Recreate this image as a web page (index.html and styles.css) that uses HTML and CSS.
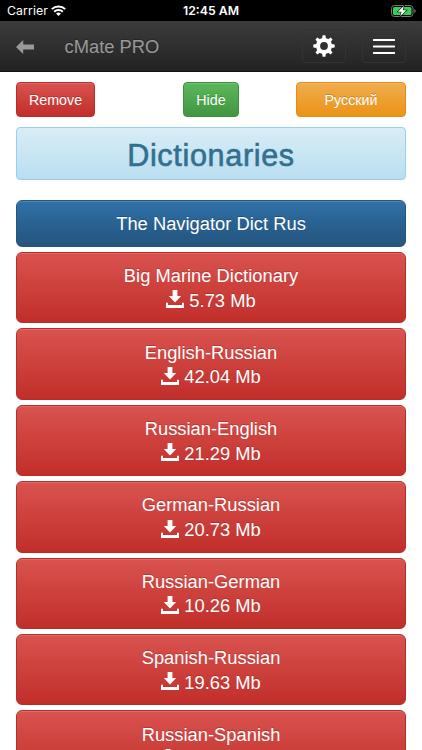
FILE: index.html
```html
<!DOCTYPE html>
<html lang="en">
<head>
<meta charset="utf-8">
<title>cMate PRO</title>
<link rel="stylesheet" href="styles.css">
</head>
<body>
<svg width="0" height="0" class="defs">
  <symbol id="download" viewBox="0 0 18 19">
    <path d="M6.6 0h4.8v6h3.8L9 12.4 2.8 6h3.8zM0 12.7h2v2.3h14v-2.3h2V18H0z"/>
  </symbol>
</svg>
<div class="status">
  <span class="carrier">Carrier</span>
  <svg class="wifi" viewBox="0 0 15 11"><g fill="none" stroke="#fff" stroke-width="2"><path d="M.8 4.1a9.6 9.6 0 0 1 13.4 0M3.2 6.7a6.2 6.2 0 0 1 8.6 0"/></g><path fill="#fff" d="M5 8.6a3.6 3.6 0 0 1 5 0L7.5 11z"/></svg>
  <span class="clock">12:45 AM</span>
  <svg class="battery" viewBox="0 0 25 12"><rect x=".5" y=".5" width="21.5" height="11" rx="3" fill="none" stroke="#777"/><rect x="2" y="2" width="18.5" height="8" rx="1.6" fill="#35d058"/><path d="M23.3 4v4q1.4-.6 1.4-2t-1.4-2z" fill="#777"/><path d="M12.9.8 6.8 6.8h3.7L9.3 11.3l6.1-6h-3.7z" fill="#fff" stroke="#000" stroke-width="1.1" paint-order="stroke"/></svg>
</div>
<header class="navbar">
  <svg class="back" viewBox="0 0 18 14"><path fill="#999" d="M0 7 7.2 0v4.4H18v5.2H7.2V14z"/></svg>
  <span class="brand">cMate PRO</span>
  <div class="nav-btn gear">
    <svg viewBox="-11 -11 22 22" width="22" height="22"><g fill="#fff"><path id="t" d="M-2-7-1.4-10.7h2.8L2-7V7l-.6 3.7h-2.8L-2 7z"/><use href="#t" transform="rotate(45)"/><use href="#t" transform="rotate(90)"/><use href="#t" transform="rotate(135)"/><circle r="8"/></g><circle r="3.9" fill="#303030"/></svg>
  </div>
  <div class="nav-btn menu"><svg viewBox="0 0 22 15" width="22" height="15"><path d="M.8 1h20.6M.8 7.5h20.6M.8 14h20.6" stroke="#fff" stroke-width="2" stroke-linecap="round"/></svg></div>
</header>
<main>
  <div class="actions">
    <div class="btn red remove">Remove</div>
    <div class="btn green">Hide</div>
    <div class="btn orange">Русский</div>
  </div>
  <h1>Dictionaries</h1>
  <div class="list">
    <div class="item blue">The Navigator Dict Rus</div>
    <div class="item red"><span>Big Marine Dictionary</span><span><svg><use href="#download"/></svg>5.73 Mb</span></div>
    <div class="item red"><span>English-Russian</span><span><svg><use href="#download"/></svg>42.04 Mb</span></div>
    <div class="item red"><span>Russian-English</span><span><svg><use href="#download"/></svg>21.29 Mb</span></div>
    <div class="item red"><span>German-Russian</span><span><svg><use href="#download"/></svg>20.73 Mb</span></div>
    <div class="item red"><span>Russian-German</span><span><svg><use href="#download"/></svg>10.26 Mb</span></div>
    <div class="item red"><span>Spanish-Russian</span><span><svg><use href="#download"/></svg>19.63 Mb</span></div>
    <div class="item red last"><span>Russian-Spanish</span><span><svg><use href="#download"/></svg></span></div>
  </div>
</main>
</body>
</html>
```
FILE: styles.css
```css
* { box-sizing: border-box; }
html, body { height: 750px; overflow: hidden; }
body { margin: 0; background: #fff; font-family: "Liberation Sans", Arial, sans-serif; color: #fff; }
.defs { display: block; }
.status { height: 21px; background: #000; display: grid; grid-template-columns: 44px 1fr auto 1fr 24px; align-items: center; padding: 0 6px 0 7px; font-family: Inter, sans-serif; font-size: 12.3px; }
.carrier { letter-spacing: .1px; }
.wifi { width: 15px; height: 11px; }
.clock { font-weight: 600; margin-right: 21px; }
.battery { width: 25px; height: 12px; grid-column: 5; margin-left: -1px; }
.navbar { height: 51px; background: linear-gradient(#3c3c3c, #222); border-bottom: 1px solid #111; display: flex; align-items: center; padding: 0 16px; }
.back { width: 18px; height: 14px; margin-top: 2px; }
.brand { margin: 2px 0 0 30.5px; font-size: 18.35px; color: #999; text-shadow: 0 -1px 0 rgba(0,0,0,.25); }
.nav-btn { width: 44px; height: 34px; border: 1px solid #333; border-radius: 4px; display: flex; align-items: center; justify-content: center; }
.gear { margin-left: auto; }
.menu { margin-left: 16px; }
main { padding: 10px 16px 0; }
.actions { display: flex; justify-content: space-between; height: 35px; }
.btn { height: 35px; border: 1px solid; border-radius: 4px; font-size: 14.3px; display: flex; align-items: center; justify-content: center; text-shadow: 0 -1px 0 rgba(0,0,0,.2); box-shadow: inset 0 1px 0 rgba(255,255,255,.15); }
.remove { width: 79px; }
.green { width: 56px; margin-left: 31px; background: linear-gradient(#5cb85c, #419641); border-color: #3e8f3e; }
.orange { width: 110px; background: linear-gradient(#f0ad4e, #eb9316); border-color: #e38d13; }
.red { background: linear-gradient(#d9534f, #c12e2a); border-color: #b92c28; }
h1 { margin: 10px 0 20px; height: 53px; border: 1px solid #9acfea; border-radius: 4px; background: linear-gradient(#d9edf7, #b9def0); color: #31708f; font-size: 30.6px; font-weight: 400; -webkit-text-stroke: .6px #31708f; letter-spacing: .65px; display: flex; align-items: center; justify-content: center; padding-top: 3px; }
.list { display: flex; flex-direction: column; gap: 5.1px; }
.item { flex: none; height: 71.3px; border: 1px solid; border-radius: 6px; display: flex; flex-direction: column; align-items: center; justify-content: center; padding-top: 2px; font-size: 18.35px; line-height: 24.5px; text-shadow: 0 -1px 0 rgba(0,0,0,.2); box-shadow: inset 0 1px 0 rgba(255,255,255,.15); }
.item.red { border-color: #b92c28; }
.item.blue { height: 47px; background: linear-gradient(#3071a9, #265c89 70%, #26567f); border-color: #245580; }
.item span { display: flex; align-items: center; height: 24.5px; }
.item svg { width: 18px; height: 19px; margin: -2px 5px 0 0; fill: #fff; }
.last svg { margin-right: 86px; }
```
